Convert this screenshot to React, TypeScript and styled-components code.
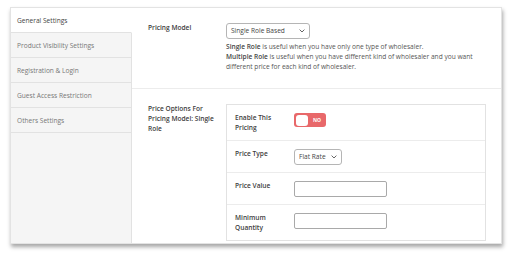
import React from 'react'
import styled, { createGlobalStyle } from 'styled-components'

const GlobalStyle = createGlobalStyle`
  html, body {
    margin: 0;
    padding: 0;
    background: #ffffff;
  }
  body {
    font-family: "Open Sans", "Noto Sans", sans-serif;
    font-size: 6.6px;
    color: #444;
  }
`

const Page = styled.div`
  padding: 7px 9px 0 10px;
  width: 511px;
  height: 254px;
  box-sizing: border-box;
`

const Card = styled.div`
  display: flex;
  height: 237px;
  background: #fff;
  border: 1px solid #e3e3e3;
  box-sizing: border-box;
  box-shadow: 1px 3px 4px rgba(0, 0, 0, 0.35);
`

const Sidebar = styled.div`
  width: 121px;
  display: flex;
  flex-direction: column;
  background: #f5f5f5;
`

const Tab = styled.div<{ $active?: boolean }>`
  height: 25px;
  box-sizing: border-box;
  display: flex;
  align-items: center;
  padding-left: 6px;
  border-bottom: 1px solid #e2e2e2;
  border-right: 1px solid ${(p) => (p.$active ? 'transparent' : '#e2e2e2')};
  background: ${(p) => (p.$active ? '#fff' : 'transparent')};
  color: ${(p) => (p.$active ? '#444' : '#777')};
`

const Filler = styled.div`
  flex: 1;
  border-right: 1px solid #e2e2e2;
`

const Content = styled.div`
  flex: 1;
  display: flex;
  flex-direction: column;
`

const Section = styled.div<{ $last?: boolean }>`
  display: grid;
  grid-template-columns: 78px 1fr;
  padding: 15px 15px ${(p) => (p.$last ? '2px' : '16px')} 16px;
  border-bottom: ${(p) => (p.$last ? 'none' : '1px solid #ececec')};
  line-height: 10px;
`

const Label = styled.div`
  font-weight: 600;
  color: #3d3d3d;
  padding-right: 6px;
`

const Field = styled.div`
  display: flex;
  flex-direction: column;
  align-items: flex-start;
`

const SelectBox = styled.div<{ $w: number }>`
  width: ${(p) => p.$w}px;
  height: 16px;
  box-sizing: border-box;
  border: 1px solid #b5b5b5;
  border-radius: 3px;
  display: flex;
  align-items: center;
  justify-content: space-between;
  padding: 0 4px 0 4px;
  color: #444;
  background: #fff;
`

const Description = styled.div`
  margin-top: 3px;
  color: #555;
`

const Para = styled.p`
  margin: 0;
  b {
    font-weight: 600;
    color: #444;
  }
`

const Table = styled.div`
  border: 1px solid #e2e2e2;
  display: flex;
  flex-direction: column;
`

const Row = styled.div<{ $last?: boolean }>`
  display: grid;
  grid-template-columns: 59px 1fr;
  align-items: start;
  padding: 8px 8px 7px 8px;
  border-bottom: ${(p) => (p.$last ? 'none' : '1px solid #ececec')};
`

const RowLabel = styled.div`
  font-weight: 600;
  color: #3d3d3d;
`

const Toggle = styled.div`
  width: 32px;
  height: 14px;
  box-sizing: border-box;
  border-radius: 3px;
  background: #e8686a;
  display: flex;
  align-items: center;
  padding: 0 2px;
  gap: 5px;
  color: #fff;
  font-size: 5px;
  font-weight: 700;
`

const Knob = styled.div`
  width: 12px;
  height: 11px;
  border-radius: 3px;
  background: #fff;
`

const TextInput = styled.div`
  width: 93px;
  height: 16px;
  box-sizing: border-box;
  border: 1px solid #a9a9a9;
  border-radius: 2px;
  background: #fff;
`

const Chevron = () => (
  <svg width="6" height="4" viewBox="0 0 6 4">
    <path d="M0.6 0.6 L3 3 L5.4 0.6" fill="none" stroke="#555" strokeWidth="0.9" />
  </svg>
)

const tabs = [
  'General Settings',
  'Product Visibility Settings',
  'Registration & Login',
  'Guest Access Restriction',
  'Others Settings',
]

export default function App() {
  return (
    <Page>
      <GlobalStyle />
      <Card>
        <Sidebar>
          {tabs.map((t, i) => (
            <Tab key={t} $active={i === 0}>
              {t}
            </Tab>
          ))}
          <Filler />
        </Sidebar>
        <Content>
          <Section>
            <Label>Pricing Model</Label>
            <Field>
              <SelectBox $w={84}>
                <span>Single Role Based</span>
                <Chevron />
              </SelectBox>
              <Description>
                <Para>
                  <b>Single Role</b> is useful when you have only one type of wholesaler.
                </Para>
                <Para>
                  <b>Multiple Role</b> is useful when you have different kind of wholesaler and you
                  want different price for each kind of wholesaler.
                </Para>
              </Description>
            </Field>
          </Section>
          <Section $last>
            <Label>Price Options For Pricing Model: Single Role</Label>
            <Table>
              <Row>
                <RowLabel>
                  Enable This
                  <br />
                  Pricing
                </RowLabel>
                <Toggle>
                  <Knob />
                  <span>NO</span>
                </Toggle>
              </Row>
              <Row>
                <RowLabel>Price Type</RowLabel>
                <SelectBox $w={48}>
                  <span>Flat Rate</span>
                  <Chevron />
                </SelectBox>
              </Row>
              <Row>
                <RowLabel>Price Value</RowLabel>
                <TextInput />
              </Row>
              <Row $last>
                <RowLabel>
                  Minimum
                  <br />
                  Quantity
                </RowLabel>
                <TextInput />
              </Row>
            </Table>
          </Section>
        </Content>
      </Card>
    </Page>
  )
}
